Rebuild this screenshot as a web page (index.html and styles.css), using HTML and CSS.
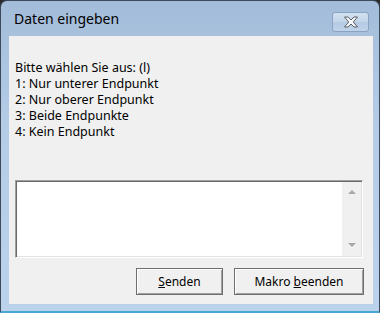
FILE: index.html
```html
<!DOCTYPE html>
<html lang="de">
<head>
    <meta charset="UTF-8">
    <title>Daten eingeben</title>
    <link rel="stylesheet" href="styles.css">
</head>
<body>
    <div class="window">
        <div class="titlebar">
            <span class="title">Daten eingeben</span>
            <div class="close">
                <svg width="20" height="14" viewBox="0 0 20 14">
                    <path d="M3.5 2 L7 2 L10 5 L13 2 L16.5 2 L12.3 7 L16.5 12 L13 12 L10 9 L7 12 L3.5 12 L7.7 7 Z"
                          fill="#f4f6f8" stroke="#5a5f66" stroke-width="1" stroke-linejoin="round"/>
                </svg>
            </div>
        </div>
        <div class="content">
            <div class="prompt">
                Bitte wählen Sie aus: (l)<br>
                1: Nur unterer Endpunkt<br>
                2: Nur oberer Endpunkt<br>
                3: Beide Endpunkte<br>
                4: Kein Endpunkt
            </div>
            <div class="textbox">
                <div class="area"></div>
                <div class="scrollbar">
                    <span class="arrow up"></span>
                    <span class="arrow down"></span>
                </div>
            </div>
            <div class="buttons">
                <button class="btn send"><u>S</u>enden</button>
                <button class="btn quit">Makro <u>b</u>eenden</button>
            </div>
        </div>
    </div>
</body>
</html>
```

FILE: styles.css
```css
body {
    margin: 0;
    padding: 0;
    background: #2b2b2b;
    font-family: "Noto Sans", "Open Sans", sans-serif;
}
.window {
    width: 380px;
    height: 313px;
    box-sizing: border-box;
    border: 1px solid #3c4a5a;
    border-bottom: 2px solid #4aa8d0;
    border-radius: 7px 7px 0 0;
    background: linear-gradient(#a3bcd9, #b4cce6 40%, #bad2ec);
    padding: 0 6px 7px 8px;
    display: flex;
    flex-direction: column;
}
.titlebar {
    height: 35px;
    display: flex;
    align-items: flex-start;
    justify-content: space-between;
}
.title {
    font-size: 14px;
    color: #000;
    margin: 8px 0 0 5px;
}
.close {
    width: 37px;
    height: 20px;
    box-sizing: border-box;
    margin: 11px 4px 0 0;
    border: 1px solid #8aa3c0;
    border-radius: 3px;
    background: linear-gradient(#d3e1f1, #c3d5ea 50%, #b5cae3 51%, #bfd3ea);
    display: flex;
    align-items: center;
    justify-content: center;
}
.content {
    flex: 1;
    background: #f0f0f0;
    padding: 24px 0 0 6px;
    font-size: 12.5px;
    color: #000;
}
.prompt {
    line-height: 16px;
    height: 80px;
}
.textbox {
    margin-top: 40px;
    width: 348px;
    height: 78px;
    box-sizing: border-box;
    border-top: 1px solid #a0a0a0;
    border-left: 1px solid #a0a0a0;
    border-right: 1px solid #fff;
    border-bottom: 1px solid #fff;
    box-shadow: inset 1px 1px #696969, inset -1px -1px #e3e3e3;
    padding: 1px;
    display: flex;
}
.area {
    flex: 1;
    background: #fff;
}
.scrollbar {
    width: 19px;
    background: #f0f0f0;
    display: flex;
    flex-direction: column;
    justify-content: space-between;
    align-items: center;
    padding: 8px 0 9px 0;
}
.arrow {
    width: 0;
    height: 0;
    border-left: 4px solid transparent;
    border-right: 4px solid transparent;
}
.arrow.up {
    border-bottom: 4px solid #a8a8a8;
}
.arrow.down {
    border-top: 4px solid #a8a8a8;
}
.buttons {
    margin-top: 10px;
    width: 349px;
    display: flex;
    justify-content: flex-end;
    gap: 11px;
}
.btn {
    height: 27px;
    box-sizing: border-box;
    font-family: "Noto Sans", "Open Sans", sans-serif;
    font-size: 12px;
    color: #000;
    background: #f0f0f0;
    border: 1px solid #6e6e6e;
    box-shadow: inset 1px 1px #fff, inset -1px -1px #a0a0a0;
    padding: 0;
}
.send {
    width: 87px;
}
.quit {
    width: 130px;
}
```
